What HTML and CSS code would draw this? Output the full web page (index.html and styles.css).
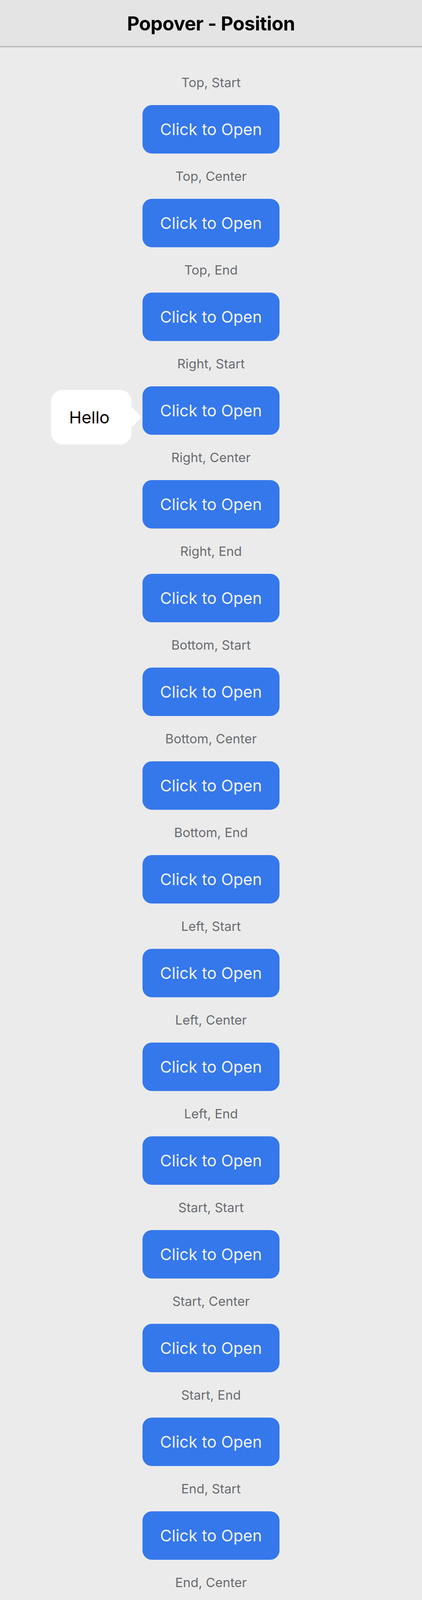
FILE: index.html
```html
<!DOCTYPE html>
<html lang="en">
<head>
<meta charset="utf-8">
<title>Popover - Position</title>
<link rel="stylesheet" href="styles.css">
</head>
<body>
<header class="toolbar"><h1 class="title">Popover - Position</h1></header>
<main class="content">
  <section class="demo"><p class="label">Top, Start</p><div class="trigger"><button class="open">Click to Open</button></div></section>
  <section class="demo"><p class="label">Top, Center</p><div class="trigger"><button class="open">Click to Open</button></div></section>
  <section class="demo"><p class="label">Top, End</p><div class="trigger"><button class="open">Click to Open</button></div></section>
  <section class="demo"><p class="label">Right, Start</p><div class="trigger"><button class="open">Click to Open</button>
    <div class="popover"><div class="popover-body">Hello</div><svg class="arrow" width="24" height="48" viewBox="0 0 24 48"><path d="M0 0 C3 0 5 1.5 7 4 L22.5 21 C24 22.8 24 25.2 22.5 27 L7 44 C5 46.5 3 48 0 48 Z" fill="#ffffff"/></svg></div>
  </div></section>
  <section class="demo"><p class="label">Right, Center</p><div class="trigger"><button class="open">Click to Open</button></div></section>
  <section class="demo"><p class="label">Right, End</p><div class="trigger"><button class="open">Click to Open</button></div></section>
  <section class="demo"><p class="label">Bottom, Start</p><div class="trigger"><button class="open">Click to Open</button></div></section>
  <section class="demo"><p class="label">Bottom, Center</p><div class="trigger"><button class="open">Click to Open</button></div></section>
  <section class="demo"><p class="label">Bottom, End</p><div class="trigger"><button class="open">Click to Open</button></div></section>
  <section class="demo"><p class="label">Left, Start</p><div class="trigger"><button class="open">Click to Open</button></div></section>
  <section class="demo"><p class="label">Left, Center</p><div class="trigger"><button class="open">Click to Open</button></div></section>
  <section class="demo"><p class="label">Left, End</p><div class="trigger"><button class="open">Click to Open</button></div></section>
  <section class="demo"><p class="label">Start, Start</p><div class="trigger"><button class="open">Click to Open</button></div></section>
  <section class="demo"><p class="label">Start, Center</p><div class="trigger"><button class="open">Click to Open</button></div></section>
  <section class="demo"><p class="label">Start, End</p><div class="trigger"><button class="open">Click to Open</button></div></section>
  <section class="demo"><p class="label">End, Start</p><div class="trigger"><button class="open">Click to Open</button></div></section>
  <section class="demo"><p class="label">End, Center</p><div class="trigger"><button class="open">Click to Open</button></div></section>
  <section class="demo"><p class="label">End, End</p><div class="trigger"><button class="open">Click to Open</button></div></section>
</main>
</body>
</html>
```
FILE: styles.css
```css
html, body {
  margin: 0;
  padding: 0;
}
body {
  background: #ebebeb;
  font-family: Inter, "Noto Sans", "Liberation Sans", sans-serif;
}
.toolbar {
  height: 118px;
  background: #e4e4e4;
  border-bottom: 3px solid #b6b6b6;
  display: flex;
  align-items: center;
  justify-content: center;
}
.title {
  margin: 0;
  padding-top: 2px;
  font-size: 49px;
  line-height: 49px;
  font-weight: 700;
  color: #000;
  letter-spacing: -0.5px;
}
.content {
  padding-top: 70px;
  display: flex;
  flex-direction: column;
  align-items: center;
}
.demo {
  display: flex;
  flex-direction: column;
  align-items: center;
  margin-bottom: 38px;
}
.label {
  margin: 0 0 38px;
  font-size: 33px;
  line-height: 40px;
  color: #686b70;
}
.trigger {
  position: relative;
}
.open {
  display: block;
  width: 351px;
  height: 124px;
  margin: 0;
  padding: 0;
  border: none;
  border-radius: 24px;
  background: #3578eb;
  color: #f1f2f4;
  font-family: inherit;
  font-size: 41px;
  font-weight: 400;
}
.popover {
  position: absolute;
  right: calc(100% + 4px);
  top: 9px;
  display: flex;
  align-items: center;
}
.popover-body {
  width: 160px;
  height: 140px;
  padding-left: 46px;
  background: #ffffff;
  border-radius: 30px;
  display: flex;
  align-items: center;
  font-size: 43px;
  color: #000;
}
.arrow {
  display: block;
}
```
